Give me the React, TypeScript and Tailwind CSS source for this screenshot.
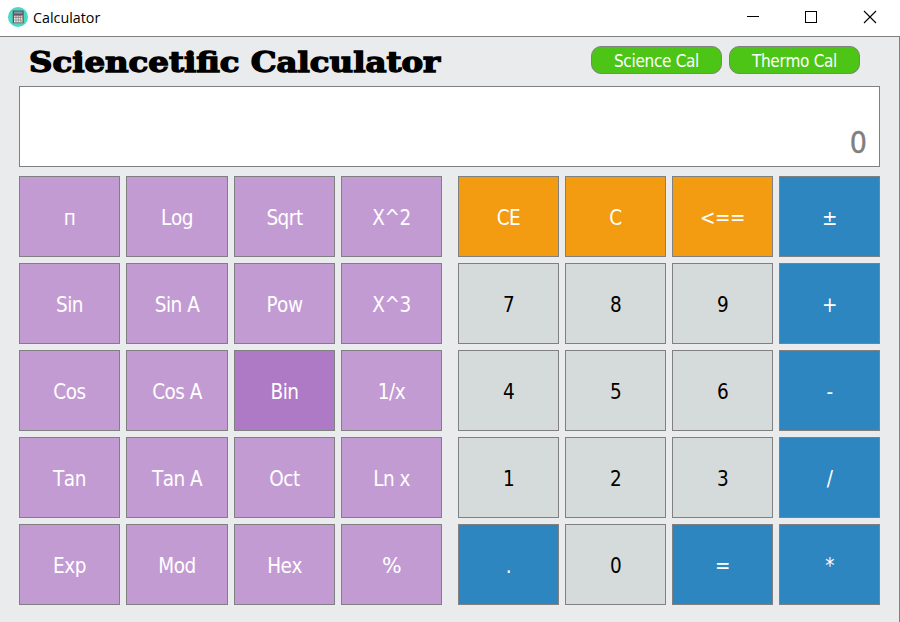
type Tone = "purple" | "active" | "orange" | "gray" | "blue";

const tones: Record<Tone, string> = {
  purple: "bg-[#c39bd3] text-white",
  active: "bg-[#af7ac5] text-white",
  orange: "bg-[#f39c12] text-white",
  gray: "bg-[#d5dbdb] text-black",
  blue: "bg-[#2e86c1] text-white",
};

const scienceKeys = [
  "п", "Log", "Sqrt", "X^2",
  "Sin", "Sin A", "Pow", "X^3",
  "Cos", "Cos A", "Bin", "1/x",
  "Tan", "Tan A", "Oct", "Ln x",
  "Exp", "Mod", "Hex", "%",
];

const basicKeys: [string, Tone][] = [
  ["CE", "orange"], ["C", "orange"], ["<==", "orange"], ["±", "blue"],
  ["7", "gray"], ["8", "gray"], ["9", "gray"], ["+", "blue"],
  ["4", "gray"], ["5", "gray"], ["6", "gray"], ["-", "blue"],
  ["1", "gray"], ["2", "gray"], ["3", "gray"], ["/", "blue"],
  [".", "blue"], ["0", "gray"], ["=", "blue"], ["*", "blue"],
];

function Key({ label, tone }: { label: string; tone: Tone }) {
  return (
    <button
      className={`flex items-center justify-center border border-[#808080] pt-[3px] text-[20.5px] leading-none tracking-[-0.5px] whitespace-pre [font-kerning:none] ${tones[tone]}`}
    >
      {label === "%" ? <span className="scale-x-[1.12]">%</span> : label}
    </button>
  );
}

function AppIcon() {
  return (
    <svg width="20" height="20" viewBox="0 0 20 20">
      <circle cx="10" cy="10" r="10" fill="#4bd9c3" />
      <rect x="4.7" y="3.5" width="11" height="12.8" rx="0.6" fill="#555966" />
      <rect x="6" y="4.6" width="8.4" height="2" fill="#8f949c" />
      <rect x="6" y="8" width="8.4" height="7.4" fill="#f0efeb" />
      <path d="M6 8.6h8.4" stroke="#e8694f" strokeWidth="1.3" />
      <path d="M6 10.5h8.4M6 13h8.4M8 8v7.4M10.3 8v7.4M12.4 8v7.4" stroke="#666a75" strokeWidth="0.6" />
      <rect x="12.7" y="12" width="1.8" height="3.4" fill="#e9b553" />
    </svg>
  );
}

export default function App() {
  return (
    <div className="flex h-[622px] w-[900px] flex-col overflow-hidden bg-white font-['DejaVu_Sans_Condensed','DejaVu_Sans',sans-serif] [font-stretch:condensed]">
      <header className="flex h-9 shrink-0 items-center pl-2">
        <div className="-mt-0.5">
          <AppIcon />
        </div>
        <span className="ml-[5px] flex-1 font-['Open_Sans',sans-serif] text-[14.3px] leading-none text-black [font-stretch:normal]">
          Calculator
        </span>
        <svg width="160" height="36" viewBox="0 0 160 36" fill="none" stroke="#000" shapeRendering="crispEdges">
          <path d="M7 16.5h12" />
          <rect x="65.5" y="11.5" width="11" height="11" />
          <path d="M124 11l12 12M136 11l-12 12" shapeRendering="auto" strokeWidth="1.1" />
        </svg>
      </header>
      <main className="flex flex-1 flex-col border-t border-r border-[#808080] bg-[#eaebed] pr-[19px] pl-[19px]">
        <div className="flex h-[49px] shrink-0 items-start justify-between pr-5 pl-[10px]">
          <h1 className="mt-3 origin-left scale-x-[1.2] font-['DejaVu_Serif',serif] text-[27px] leading-[28px] font-bold whitespace-nowrap text-black [-webkit-text-stroke:1.3px_black] [font-stretch:normal]">
            Sciencetific Calculator
          </h1>
          <div className="flex gap-[7px] pt-[9px] text-[17px] leading-none tracking-[-0.3px] text-white [font-kerning:none]">
            <button className="h-7 w-[131px] rounded-[10px] border border-[#808080] bg-[#4dc517] pt-[2px]">Science Cal</button>
            <button className="h-7 w-[131px] rounded-[10px] border border-[#808080] bg-[#4dc517] pt-[2px]">Thermo Cal</button>
          </div>
        </div>
        <div className="flex h-[81px] shrink-0 items-end justify-end border border-[#808080] bg-white pr-3 pb-2 text-[30px] leading-none text-[#808080] [-webkit-text-stroke:0.4px_#808080]">
          0
        </div>
        <div className="mt-[9px] flex gap-4">
          <div className="grid auto-rows-[81px] grid-cols-[101px_102px_101px_101px] gap-1.5">
            {scienceKeys.map((k) => (
              <Key key={k} label={k} tone={k === "Bin" ? "active" : "purple"} />
            ))}
          </div>
          <div className="grid auto-rows-[81px] grid-cols-[101px_101px_101px_101px] gap-1.5">
            {basicKeys.map(([k, tone]) => (
              <Key key={k} label={k} tone={tone} />
            ))}
          </div>
        </div>
      </main>
    </div>
  );
}
